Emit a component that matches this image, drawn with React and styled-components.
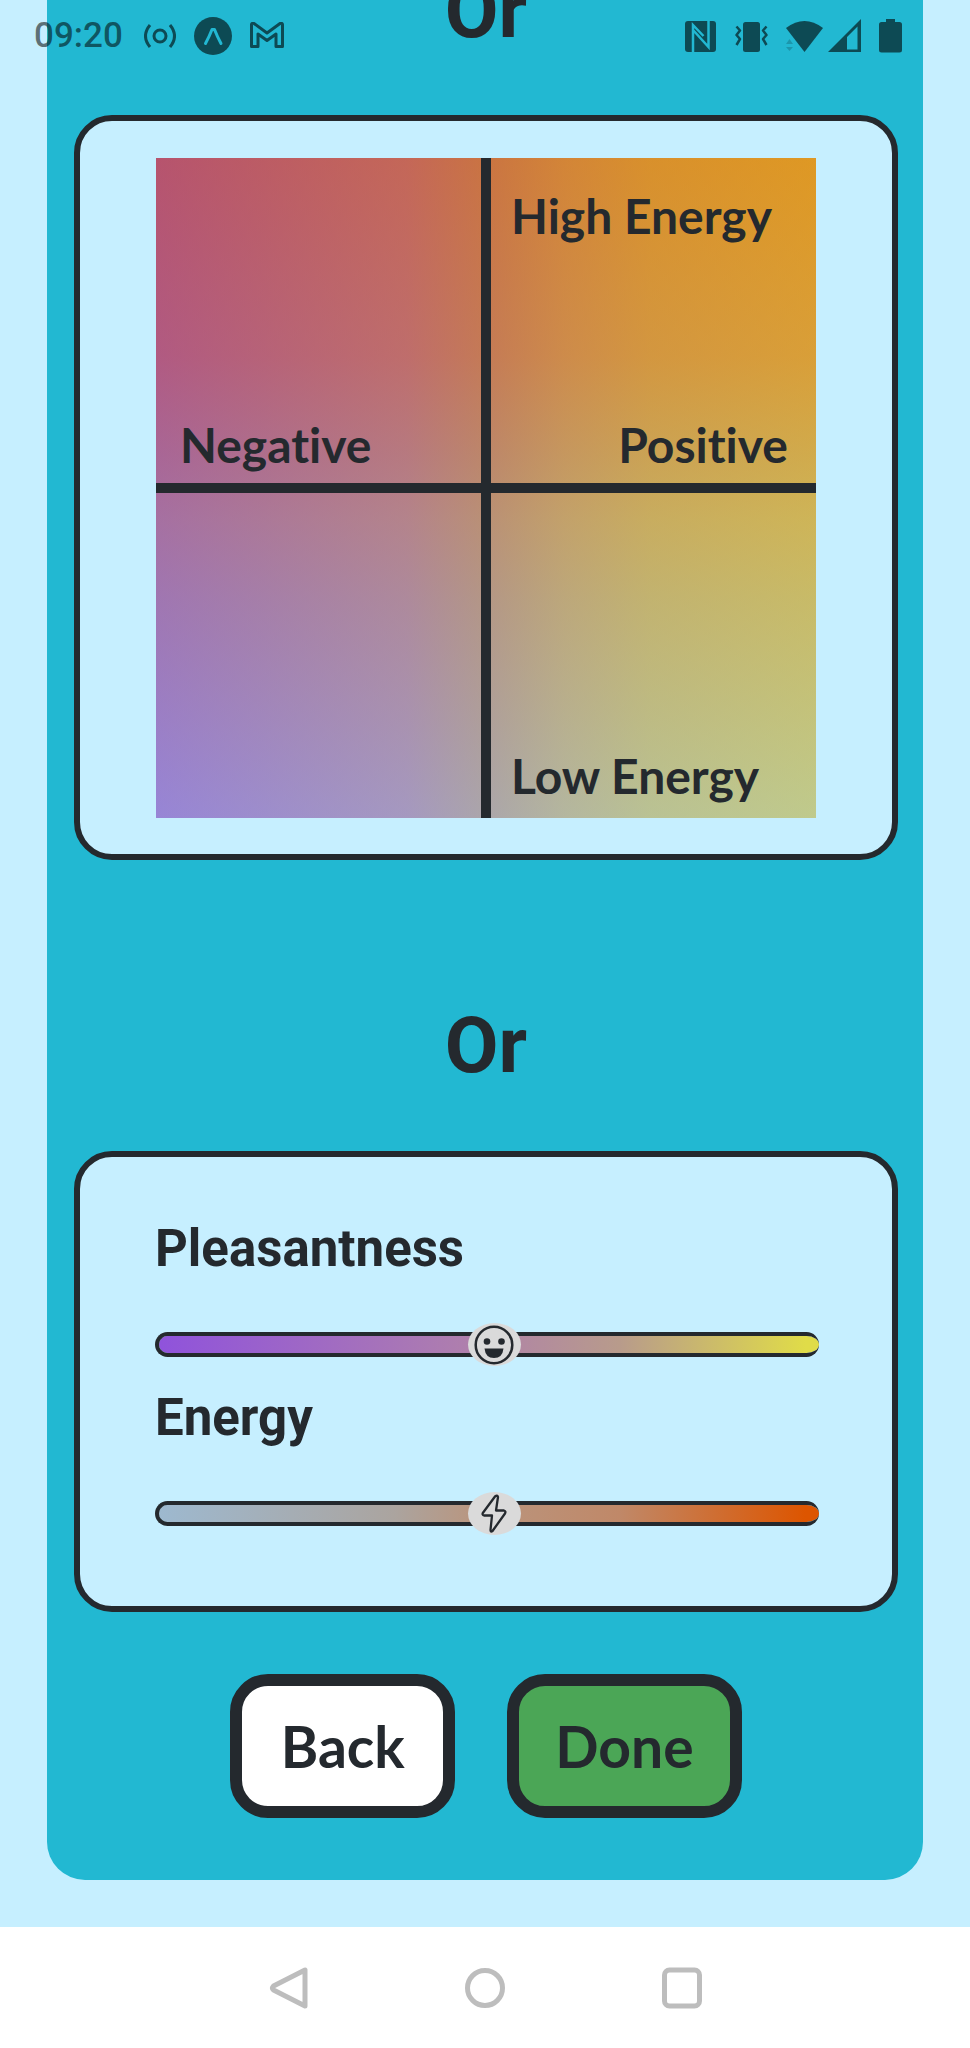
import React, { useState } from "react";
import styled, { createGlobalStyle } from "styled-components";

const ink = "#24292e";
const sky = "#c6efff";
const teal = "#22b8d2";

const GlobalStyle = createGlobalStyle`
  *, *::before, *::after { box-sizing: border-box; }
  body {
    margin: 0;
    background: #fff;
    color: ${ink};
    font-family: Roboto, "Liberation Sans", sans-serif;
  }
`;

const Screen = styled.div`
  position: relative;
  display: flex;
  flex-direction: column;
  min-height: 100vh;
  overflow: hidden;
`;

const StatusBar = styled.header`
  position: absolute;
  inset: 0 0 auto 0;
  z-index: 2;
  display: flex;
  align-items: center;
  justify-content: space-between;
  height: 72px;
  padding: 0 68px 0 34px;
  color: rgba(0, 0, 0, 0.6);

  svg { display: block; flex: none; }
`;

const StatusGroup = styled.div`
  display: flex;
  align-items: center;
  gap: 18px;
`;

const SignalPair = styled.div`
  display: flex;
  gap: 5px;
`;

const Clock = styled.time`
  margin-right: 3px;
  font-size: 35px;
  line-height: 40px;
  font-weight: 500;
  color: rgba(0, 0, 0, 0.55);
`;

const Content = styled.main`
  flex: 1;
  padding: 0 47px 47px;
  background: ${sky};
`;

/* The panel is scrolled: its first heading is partly above the screen. */
const Panel = styled.section`
  margin-top: -31px;
  padding: 0 25px 62px 27px;
  border-radius: 0 0 38px 38px;
  background: ${teal};
`;

const Divider = styled.h2`
  margin: 0;
  padding: ${(p) => (p.$spaced ? "144px 0 63px" : "0 0 62px")};
  font-size: 78px;
  line-height: 84px;
  font-weight: 700;
  text-align: center;
`;

const Card = styled.div`
  padding: ${(p) => p.$padding};
  border: 6px solid ${ink};
  border-radius: 38px;
  background: ${sky};
`;

const MoodGrid = styled.div`
  display: grid;
  grid-template: 1fr 1fr / 1fr 1fr;
  gap: 10px;
  aspect-ratio: 1;
  background:
    linear-gradient(${ink}, ${ink}) center / 10px 100% no-repeat,
    linear-gradient(${ink}, ${ink}) center / 100% 10px no-repeat,
    linear-gradient(to bottom, #dd550080 0%, #d2622880 30%, #c27a5080 45%, #bc8e6880 55%, #b09a8880 67%, #9fb8d080 100%),
    linear-gradient(to right, #8f52dc 0%, #ab79b0 38%, #b79384 50%, #c9b56e 62%, #d4cc58 75%, #e0dc48 100%);
`;

const Quadrant = styled.div`
  display: flex;
  flex-direction: column;
  justify-content: ${(p) => p.$justify || "flex-end"};
  padding: ${(p) => p.$padding};
`;

const AxisLabel = styled.span`
  align-self: ${(p) => (p.$right ? "flex-end" : "flex-start")};
  font-family: Lato, "Liberation Sans", sans-serif;
  font-size: 48px;
  line-height: 60px;
  font-weight: 700;
  font-variant-ligatures: none;
  white-space: nowrap;
`;

const Field = styled.div`
  display: flex;
  flex-direction: column;
  gap: 44px;

  & + & { margin-top: 22px; }
`;

const FieldLabel = styled.label`
  font-size: 51px;
  line-height: 60px;
  font-weight: 700;
`;

const SliderBox = styled.div`
  position: relative;
  display: flex;
  align-items: center;
  height: 43px;
`;

const Range = styled.input`
  appearance: none;
  width: 100%;
  height: 25px;
  margin: 0;
  border: solid ${ink};
  border-width: 4px 0 4px 4px;
  border-radius: 13px;
  background: ${(p) => p.$track};
  background-origin: border-box;
  background-clip: padding-box;
  cursor: pointer;

  &::-webkit-slider-thumb {
    appearance: none;
    width: 53px;
    height: 43px;
    background: transparent;
  }
`;

const Thumb = styled.span`
  position: absolute;
  top: 0;
  display: flex;
  align-items: center;
  justify-content: center;
  width: 53px;
  height: 43px;
  border-radius: 50%;
  background: #dadada;
  pointer-events: none;
`;

const Actions = styled.div`
  display: flex;
  justify-content: center;
  gap: 52px;
  padding-top: 62px;
`;

const ActionButton = styled.button`
  min-width: 225px;
  height: 144px;
  padding: 0 36px;
  border: 12px solid ${ink};
  border-radius: 38px;
  background: ${(p) => (p.$primary ? "#4ba656" : "#fff")};
  color: ${ink};
  font-family: Lato, "Liberation Sans", sans-serif;
  font-size: 57px;
  line-height: 72px;
  font-weight: 700;
  cursor: pointer;
`;

const NavBar = styled.nav`
  display: flex;
  align-items: center;
  justify-content: center;
  gap: 157px;
  height: 121px;
  background: #fff;
`;

const NavButton = styled.button`
  display: flex;
  padding: 0;
  border: 0;
  background: none;
  color: #bdbdbd;
  cursor: pointer;
`;

const CastIcon = () => (
  <svg width="32" height="40" viewBox="0 0 32 40" fill="none" stroke="currentColor" aria-hidden="true">
    <circle cx="16" cy="20" r="6" strokeWidth="3" />
    <path d="M6 9Q-3 20 6 31M26 9Q35 20 26 31" strokeWidth="3" />
  </svg>
);

const ExpoIcon = () => (
  <svg width="38" height="40" viewBox="0 0 38 40" aria-hidden="true">
    <circle cx="19" cy="20" r="19" fill="currentColor" />
    <path d="M11.5 27.500Q15.500 20 18 13.500H20.500Q23 20 27 27.500" fill="none" stroke={teal} strokeWidth="3" strokeLinejoin="round" strokeLinecap="round" />
  </svg>
);

const MailIcon = () => (
  <svg width="34" height="40" viewBox="0 0 34 40" fill="none" stroke="currentColor" strokeWidth="3" strokeLinejoin="round" aria-hidden="true">
    <path d="M1.500 30.500V8.500Q1.500 7 4 7.500L17 17L30 7.500Q32.500 7 32.500 8.500V30.500H26V18L17 24.500L8 18V30.500Z" />
  </svg>
);

const NfcIcon = () => (
  <svg width="32" height="40" viewBox="0 0 32 40" aria-hidden="true">
    <rect x="0" y="5" width="31" height="31" rx="3" fill="currentColor" />
    <path d="M8 36V9L18.500 20M23.500 5V31L8.500 14.500" fill="none" stroke={teal} strokeWidth="2.500" />
  </svg>
);

const VibrateIcon = () => (
  <svg width="33" height="40" viewBox="0 0 33 40" aria-hidden="true">
    <rect x="8" y="6" width="17" height="30" rx="2.500" fill="currentColor" />
    <path d="M1.500 10.500L5 14.500L1.500 19L5 23L1.500 29M31.500 10.500L28 14.500L31.500 19L28 23L31.500 29" fill="none" stroke="currentColor" strokeWidth="2.500" strokeLinejoin="round" />
  </svg>
);

const WifiIcon = () => (
  <svg width="37" height="40" viewBox="0 0 37 40" fill="currentColor" aria-hidden="true">
    <path d="M0 12Q18.500-2 37 12L18.500 36Z" />
    <path d="M0 28L3.500 23L7 28ZM0 31H7L3.500 35Z" opacity="0.3" />
  </svg>
);

const SignalIcon = () => (
  <svg width="33" height="40" viewBox="0 0 33 40" aria-hidden="true">
    <path fill="currentColor" fillRule="evenodd" d="M33 3V36H0ZM19 21V33.500H29.500V10.500Z" />
  </svg>
);

const BatteryIcon = () => (
  <svg width="23" height="40" viewBox="0 0 23 40" aria-hidden="true">
    <path fill="currentColor" d="M7 3H16V6H20.500Q23 6 23 8.500V34Q23 36.500 20.500 36.500H2.500Q0 36.500 0 34V8.500Q0 6 2.500 6H7Z" />
  </svg>
);

const SmileIcon = () => (
  <svg width="40" height="40" viewBox="0 0 40 40" aria-hidden="true">
    <circle cx="20" cy="20" r="18.300" fill="none" stroke={ink} strokeWidth="2.500" />
    <circle cx="13" cy="16.500" r="3.300" fill={ink} />
    <circle cx="27.500" cy="16.500" r="3.300" fill={ink} />
    <path d="M10.500 23.500H29.500Q28.500 33 20 33Q11.500 33 10.500 23.500Z" fill={ink} />
  </svg>
);

const BoltIcon = () => (
  <svg width="26" height="40" viewBox="0 0 26 40" aria-hidden="true">
    <path
      d="M14 2.500L1.800 19Q1 21 3 21.500H11L9.500 36Q9.500 38.500 11.500 37L24 19.500Q25.200 17 23 16.500H15L17 3Q16.500.500 14 2.500Z"
      fill="none"
      stroke={ink}
      strokeWidth="2.300"
      strokeLinejoin="round"
    />
  </svg>
);

const BackIcon = () => (
  <svg width="40" height="42" viewBox="0 0 40 42" fill="none" stroke="currentColor" strokeWidth="5" strokeLinejoin="round" aria-hidden="true">
    <path d="M37 3V39L5.500 23Q3.500 21 5.500 19Z" />
  </svg>
);

const HomeIcon = () => (
  <svg width="40" height="42" viewBox="0 0 40 42" fill="none" stroke="currentColor" strokeWidth="5" aria-hidden="true">
    <circle cx="20" cy="21" r="17.500" />
  </svg>
);

const RecentsIcon = () => (
  <svg width="40" height="42" viewBox="0 0 40 42" fill="none" stroke="currentColor" strokeWidth="5" aria-hidden="true">
    <rect x="2.500" y="3" width="35" height="36" rx="5" />
  </svg>
);

function MoodSlider({ id, label, track, icon }) {
  const [value, setValue] = useState(512);
  return (
    <Field>
      <FieldLabel htmlFor={id}>{label}</FieldLabel>
      <SliderBox>
        <Range
          id={id}
          type="range"
          min="0"
          max="1000"
          value={value}
          $track={track}
          onChange={(e) => setValue(Number(e.target.value))}
        />
        <Thumb style={{ left: `calc((100% - 53px) * ${value / 1000})` }}>{icon}</Thumb>
      </SliderBox>
    </Field>
  );
}

export default function App() {
  return (
    <Screen>
      <GlobalStyle />
      <StatusBar>
        <StatusGroup>
          <Clock>09:20</Clock>
          <CastIcon />
          <ExpoIcon />
          <MailIcon />
        </StatusGroup>
        <StatusGroup>
          <NfcIcon />
          <VibrateIcon />
          <SignalPair>
            <WifiIcon />
            <SignalIcon />
          </SignalPair>
          <BatteryIcon />
        </StatusGroup>
      </StatusBar>

      <Content>
        <Panel>
          <Divider>Or</Divider>
          <Card $padding="37px 76px 36px">
            <MoodGrid>
              <Quadrant $padding="0 24px 8px">
                <AxisLabel>Negative</AxisLabel>
              </Quadrant>
              <Quadrant $justify="space-between" $padding="28px 28px 8px 20px">
                <AxisLabel>High Energy</AxisLabel>
                <AxisLabel $right>Positive</AxisLabel>
              </Quadrant>
              <Quadrant />
              <Quadrant $padding="0 28px 12px 20px">
                <AxisLabel>Low Energy</AxisLabel>
              </Quadrant>
            </MoodGrid>
          </Card>

          <Divider $spaced>Or</Divider>
          <Card $padding="62px 73px 71px 75px">
            <MoodSlider
              id="pleasantness"
              label="Pleasantness"
              track="linear-gradient(to right, #8f52dc, #ae7eae 46%, #b89b8b 70%, #e0dc48 98%)"
              icon={<SmileIcon />}
            />
            <MoodSlider
              id="energy"
              label="Energy"
              track="linear-gradient(to right, #9db9d0, #aba49f 36%, #b99680 48%, #c08868 70%, #dd5500 98%)"
              icon={<BoltIcon />}
            />
          </Card>

          <Actions>
            <ActionButton type="button">Back</ActionButton>
            <ActionButton type="button" $primary>Done</ActionButton>
          </Actions>
        </Panel>
      </Content>

      <NavBar>
        <NavButton type="button" aria-label="Back"><BackIcon /></NavButton>
        <NavButton type="button" aria-label="Home"><HomeIcon /></NavButton>
        <NavButton type="button" aria-label="Recent apps"><RecentsIcon /></NavButton>
      </NavBar>
    </Screen>
  );
}
